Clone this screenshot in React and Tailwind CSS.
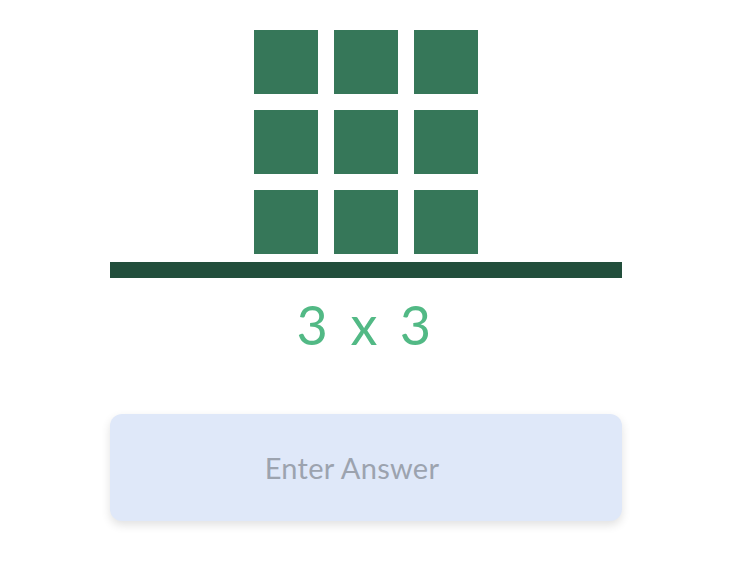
export default function App() {
  const cells = Array.from({ length: 9 });
  return (
    <div className="min-h-screen bg-white flex flex-col items-center pt-[30px]" style={{ fontFamily: 'Lato, "Open Sans", sans-serif' }}>
      <div className="grid grid-cols-3 gap-4 w-[224px]">
        {cells.map((_, i) => (
          <div key={i} className="w-16 h-16 bg-[#367759]" />
        ))}
      </div>
      <div className="mt-2 w-[512px] h-4 bg-[#224e3c]" />
      <div className="mt-[16px] text-[54px] leading-[62px] text-[#52b985] tracking-[0.08em]">3 x 3</div>
      <div className="mt-[58px] w-[512px] h-[107px] rounded-xl bg-[#dfe8f9] shadow-[0_4px_10px_rgba(0,0,0,0.12)] flex items-center justify-center pr-7">
        <input
          placeholder="Enter Answer"
          className="w-full bg-transparent text-center text-[29px] tracking-[0.01em] outline-none placeholder:text-[#9ca3af] text-[#374151]"
        />
      </div>
    </div>
  );
}
